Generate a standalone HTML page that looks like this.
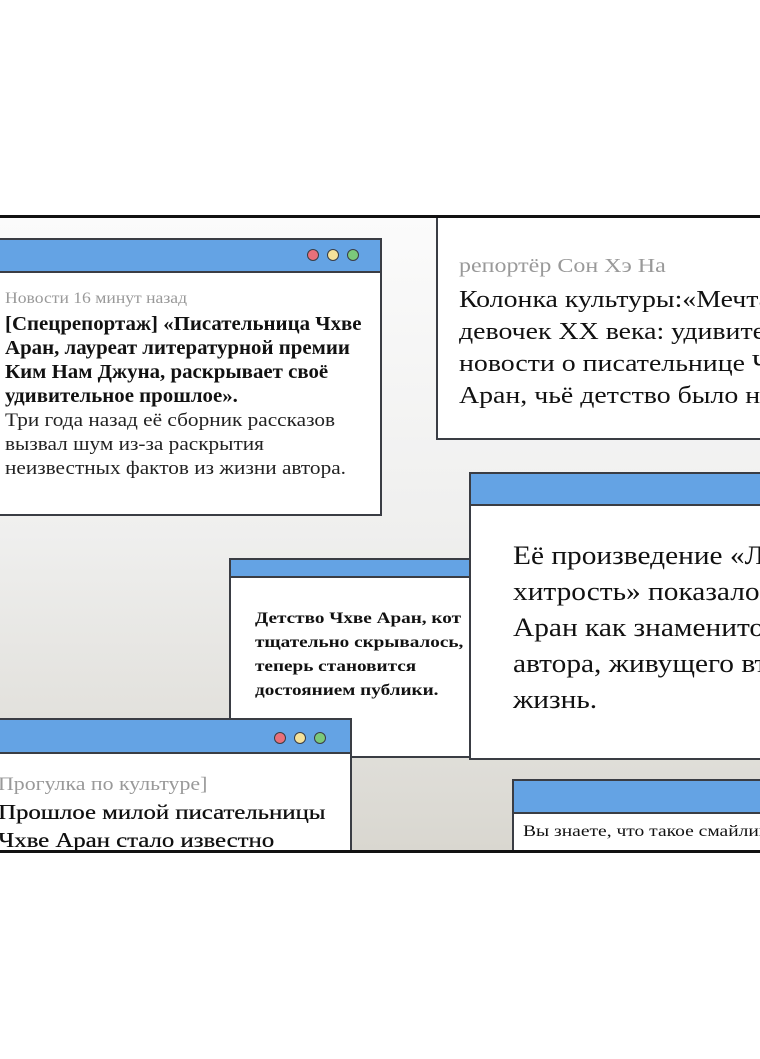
<!DOCTYPE html>
<html><head><meta charset="utf-8"><style>
*{margin:0;padding:0;box-sizing:border-box}
html,body{width:760px;height:1059px;background:#fff;overflow:hidden;font-family:"Liberation Serif",serif}
#panel{position:absolute;left:-5px;top:215px;width:775px;height:638px;border-top:3px solid #111;border-bottom:3px solid #111;overflow:hidden;background:linear-gradient(180deg,#fbfbfb 0%,#efefee 50%,#d9d7d0 100%)}
.w{position:absolute;background:#fff;border:2px solid #3a3d44}
.bar{position:absolute;left:0;right:0;top:0;background:#64a3e4;border-bottom:2px solid #3a3d44}
.dot{position:absolute;width:12px;height:12px;border-radius:50%;border:1.5px solid #3a3d44}
.t{position:absolute;white-space:nowrap;color:#111;transform-origin:0 0}
.g{color:#999}
</style></head><body>
<div id="panel">
 <!-- top right -->
 <div class="w" style="left:441px;top:-10px;width:400px;height:232px">
  <div class="t g" style="left:21px;top:45px;font-size:20px;transform:scaleX(1.2)">репортёр Сон Хэ На</div>
  <div class="t" style="left:21px;top:74px;font-size:24px;line-height:32px;transform:scaleX(1.16)">Колонка культуры:«Мечта<br>девочек XX века: удивите<br>новости о писательнице Ч<br>Аран, чьё детство было н</div>
 </div>
 <!-- top left -->
 <div class="w" style="left:-20px;top:20px;width:407px;height:278px">
  <div class="bar" style="height:33px"></div>
  <div class="dot" style="left:330px;top:9px;background:#e9707a"></div>
  <div class="dot" style="left:350px;top:9px;background:#f5e29a"></div>
  <div class="dot" style="left:370px;top:9px;background:#7bc97a"></div>
  <div class="t g" style="left:28px;top:50px;font-size:16px;transform:scaleX(1.1)">Новости 16 минут назад</div>
  <div class="t" style="left:28px;top:73px;font-size:19.5px;line-height:24px;font-weight:bold;transform:scaleX(1.07)">[Спецрепортаж] «Писательница Чхве<br>Аран, лауреат литературной премии<br>Ким Нам Джуна, раскрывает своё<br>удивительное прошлое».</div>
  <div class="t" style="left:28px;top:169px;font-size:19px;line-height:24px;color:#222;transform:scaleX(1.12)">Три года назад её сборник рассказов<br>вызвал шум из-за раскрытия<br>неизвестных фактов из жизни автора.</div>
 </div>
 <!-- middle small -->
 <div class="w" style="left:234px;top:340px;width:260px;height:200px;overflow:hidden">
  <div class="bar" style="height:18px"></div>
  <div class="t" style="left:24px;top:47px;font-size:16px;line-height:24px;font-weight:bold;transform:scaleX(1.2)">Детство Чхве Аран, кот<br>тщательно скрывалось,<br>теперь становится<br>достоянием публики.</div>
 </div>
 <!-- big right -->
 <div class="w" style="left:474px;top:254px;width:320px;height:288px;overflow:hidden">
  <div class="bar" style="height:32px"></div>
  <div class="t" style="left:42px;top:64px;font-size:26px;line-height:36px;transform:scaleX(1.13)">Её произведение «Л<br>хитрость» показало<br>Аран как знаменито<br>автора, живущего вт<br>жизнь.</div>
 </div>
 <!-- bottom left -->
 <div class="w" style="left:-20px;top:500px;width:377px;height:160px;overflow:hidden">
  <div class="bar" style="height:34px"></div>
  <div class="dot" style="left:297px;top:12px;background:#e9707a"></div>
  <div class="dot" style="left:317px;top:12px;background:#f5e29a"></div>
  <div class="dot" style="left:337px;top:12px;background:#7bc97a"></div>
  <div class="t g" style="left:21px;top:54px;font-size:19px;transform:scaleX(1.15)">Прогулка по культуре]</div>
  <div class="t" style="left:21px;top:78px;font-size:21px;line-height:28px;text-shadow:0.3px 0 0 #111;transform:scaleX(1.18)">Прошлое милой писательницы<br>Чхве Аран стало известно</div>
 </div>
 <!-- bottom right -->
 <div class="w" style="left:517px;top:561px;width:300px;height:100px;overflow:hidden">
  <div class="bar" style="height:33px"></div>
  <div class="t" style="left:9px;top:42px;font-size:16px;transform:scaleX(1.22)">Вы знаете, что такое смайлик</div>
 </div>
</div>
</body></html>
